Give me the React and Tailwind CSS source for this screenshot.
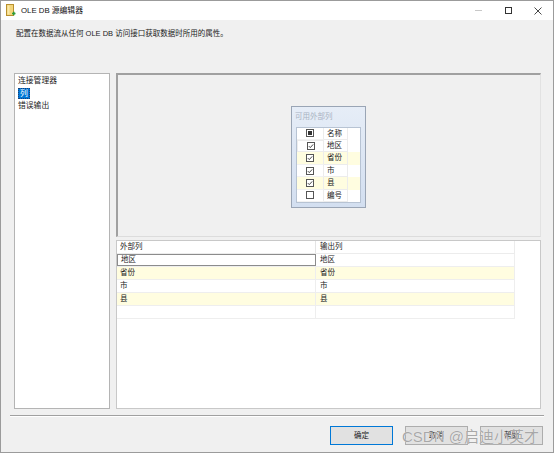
import React from 'react'

const FONT = "font-['Liberation_Sans','Noto_Sans_CJK_SC',sans-serif]"

function TitleIcon() {
  return (
    <svg width="10" height="13" viewBox="0 0 10 13">
      <rect x="0.5" y="0.5" width="7" height="11" fill="#f3d57a" stroke="#b8902e" />
      <rect x="1.5" y="1.5" width="2" height="9" fill="#fbe9a8" />
      <path d="M6 9.5 h3.5 M7.75 7.75 v3.5" stroke="#2e9b3a" strokeWidth="1.6" />
    </svg>
  )
}

function Check({ state }) {
  return (
    <svg width="8" height="8" viewBox="0 0 8 8">
      <rect x="0.5" y="0.5" width="7" height="7" fill="#fff" stroke="#555" />
      {state === 'on' && <path d="M1.8 4.1 L3.3 5.6 L6.2 2.4" fill="none" stroke="#333" strokeWidth="0.9" />}
      {state === 'mixed' && <rect x="2" y="2" width="4" height="4" fill="#333" />}
    </svg>
  )
}

const avail = [
  { name: '名称', state: 'mixed' },
  { name: '地区', state: 'on', focus: true },
  { name: '省份', state: 'on', yellow: true },
  { name: '市', state: 'on' },
  { name: '县', state: 'on', yellow: true },
  { name: '编号', state: 'off' },
]

const rows = [
  { a: '地区', b: '地区', focus: true },
  { a: '省份', b: '省份', yellow: true },
  { a: '市', b: '市' },
  { a: '县', b: '县', yellow: true },
  { a: '', b: '' },
]

function AvailableColumns() {
  return (
    <div className="absolute left-[173px] top-[31px] flex h-[102px] w-[75px] flex-col border border-[#9aa5b5] bg-gradient-to-b from-[#e6edf7] to-[#d3dff0]">
      <div className="flex h-[20px] items-center pl-[3px] text-[7.5px] text-[#a9b3c2]">可用外部列</div>
      <div className="mx-[4px] mb-[4px] flex-1 border border-[#b7c3d3] bg-white">
        {avail.map((r) => (
          <div key={r.name} className={`flex h-[12.4px] ${r.yellow ? 'bg-[#fffde0]' : ''}`}>
            <div
              className={`flex w-[27px] items-center justify-center border-r border-[#ececec] ${
                r.focus ? 'border border-[#707070]' : 'border-b border-b-[#f2f2f2]'
              }`}
            >
              <Check state={r.state} />
            </div>
            <div className="flex w-[24px] items-center border-r border-b border-[#ececec] pl-[3px] text-[7.5px] leading-none text-[#222]">
              {r.name}
            </div>
          </div>
        ))}
      </div>
    </div>
  )
}

function MappingGrid() {
  return (
    <div className="mt-[3px] flex-1 border border-[#c8c8c8] bg-white">
      <div className="flex h-[13px] w-[398px] border-b border-[#ececec] text-[7.5px] text-[#222]">
        <div className="flex w-[199px] items-center border-r border-[#e4e4e4] pl-[3px]">外部列</div>
        <div className="flex flex-1 items-center border-r border-[#ececec] pl-[4px]">输出列</div>
      </div>
      {rows.map((r, i) => (
        <div
          key={i}
          className={`flex h-[13px] w-[398px] border-b border-[#eeeeee] text-[7.5px] text-[#222] ${
            r.yellow ? 'bg-[#fffde0]' : ''
          }`}
        >
          <div
            className={`flex w-[199px] items-center pl-[3px] ${
              r.focus ? 'border border-[#8c8c8c]' : 'border-r border-[#eeeeee]'
            }`}
          >
            {r.a}
          </div>
          <div className="flex flex-1 items-center border-r border-[#eeeeee] pl-[4px]">{r.b}</div>
        </div>
      ))}
    </div>
  )
}

function Btn({ children, primary }) {
  return (
    <div
      className={`flex h-[19px] w-[63px] items-center justify-center text-[7.5px] text-[#222] ${
        primary ? 'border border-[#0078d7] bg-[#e1e1e1]' : 'border border-[#adadad] bg-[#e1e1e1]'
      }`}
    >
      {children}
    </div>
  )
}

export default function App() {
  return (
    <div className={`relative flex h-[453px] w-[554px] flex-col overflow-hidden border border-[#9b9b9b] bg-[#f0f0f0] ${FONT}`}>
      {/* title bar */}
      <div className="flex h-[19px] items-center bg-white pl-[5px]">
        <TitleIcon />
        <span className="ml-[5px] text-[7.8px] text-[#111]">OLE DB 源编辑器</span>
        <div className="ml-auto flex h-full items-center">
          <div className="flex w-[30px] justify-center">
            <div className="h-px w-[7px] bg-[#c8c8c8]" />
          </div>
          <div className="flex w-[30px] justify-center">
            <div className="h-[7px] w-[7px] border border-[#333]" />
          </div>
          <div className="flex w-[30px] justify-center">
            <svg width="8" height="8" viewBox="0 0 8 8">
              <path d="M0.5 0.5 L7.5 7.5 M7.5 0.5 L0.5 7.5" stroke="#333" strokeWidth="0.9" />
            </svg>
          </div>
        </div>
      </div>

      <div className="pl-[15px] pt-[8px] text-[7.5px] leading-[12px] text-[#222]">
        配置在数据流从任何 OLE DB 访问接口获取数据时所用的属性。
      </div>

      {/* main */}
      <div className="mt-[33px] flex h-[336px] gap-[6px] pl-[13px]">
        <div className="w-[96px] border border-[#b4b4b4] bg-white pt-[1px] pl-[3px] text-[7.8px] leading-[12.5px] text-[#222]">
          <div>连接管理器</div>
          <div>
            <span className="border border-dotted border-[#1c3f73] bg-[#0078d7] px-[1px] text-white">列</span>
          </div>
          <div>错误输出</div>
        </div>
        <div className="flex w-[425px] flex-col">
          <div className="relative h-[164px] border-t-2 border-l-2 border-[#a0a0a0] border-r border-b border-r-[#e2e2e2] border-b-[#dcdcdc] bg-[#f0f0f0]">
            <AvailableColumns />
          </div>
          <MappingGrid />
        </div>
      </div>

      <div className="mx-[9px] mt-[6px] h-[2px] border-t border-b border-t-[#a0a0a0] border-b-white" />

      <div className="mt-[9px] flex justify-end gap-[12px] pr-[10px]">
        <Btn primary>确定</Btn>
        <Btn>取消</Btn>
        <Btn>帮助</Btn>
      </div>

      <div className="pointer-events-none absolute left-[401px] top-[427px] text-[15px] leading-[18px] text-[#a8a8a8] [text-shadow:0_0_1px_#fff]">
        CSDN @启迪小英才
      </div>
    </div>
  )
}
